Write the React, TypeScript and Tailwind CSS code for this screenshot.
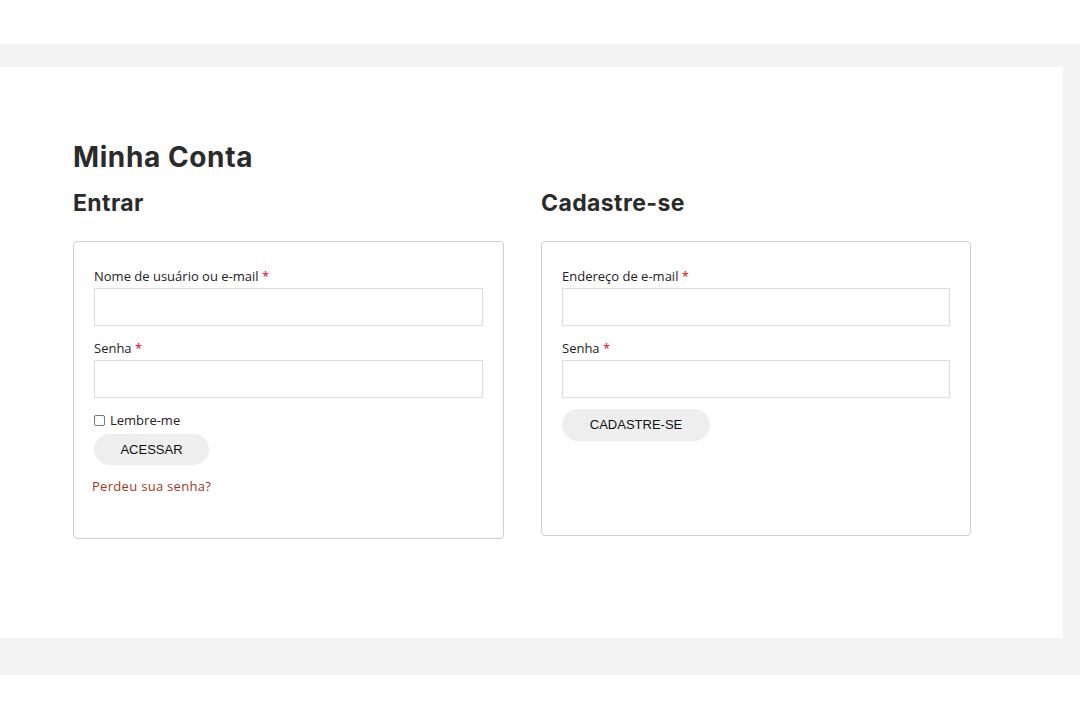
export default function App() {
  const label = "block text-[13px] text-[#222] mb-[3px] leading-[18px]"
  const input = "block w-full h-[38px] border border-[#dcdcdc] bg-white"
  const star = <span className="text-[#e2001a]">*</span>

  return (
    <div className="w-[1080px] h-[720px] bg-white font-['Open_Sans',sans-serif]">
      <div className="h-[44px]" />
      <div className="bg-[#f3f3f3] pt-[23px] pb-[37px] pr-[17px]">
        <div className="bg-white h-[571px] pl-[73px] pt-[71px]">
          <h1 className="font-['Inter',sans-serif] font-bold text-[28px] leading-[38px] text-[#2b2b2b] tracking-[0.6px]">
            Minha Conta
          </h1>
          <div className="flex gap-[37px] mt-[12px]">
            {/* Entrar */}
            <div className="w-[431px]">
              <h2 className="font-['Inter',sans-serif] font-bold text-[23px] leading-[30px] text-[#2b2b2b] tracking-[0.4px]">Entrar</h2>
              <div className="mt-[23px] h-[298px] border border-[#cfcfcf] rounded-[4px] px-[20px] pt-[25px]">
                <label className={label}>Nome de usuário ou e-mail {star}</label>
                <div className={input} />
                <label className={label + " mt-[13px]"}>Senha {star}</label>
                <div className={input} />
                <div className="flex items-center gap-[5px] mt-[13px] text-[13px] text-[#222] leading-[18px]">
                  <span className="w-[11px] h-[11px] border border-[#767676] rounded-[2px] bg-white" />
                  Lembre-me
                </div>
                <button className="mt-[5px] w-[115px] h-[31px] rounded-full bg-[#eeeeee] font-['Liberation_Sans',sans-serif] text-[13px] text-[#111]">
                  ACESSAR
                </button>
                <p className="mt-[12px] -ml-[2px] text-[13px] text-[#9b3a24] tracking-[0.3px]">Perdeu sua senha?</p>
              </div>
            </div>
            {/* Cadastre-se */}
            <div className="w-[430px]">
              <h2 className="font-['Inter',sans-serif] font-bold text-[23px] leading-[30px] text-[#2b2b2b] tracking-[0.4px]">Cadastre-se</h2>
              <div className="mt-[23px] h-[295px] border border-[#cfcfcf] rounded-[4px] px-[20px] pt-[25px]">
                <label className={label}>Endereço de e-mail {star}</label>
                <div className={input} />
                <label className={label + " mt-[13px]"}>Senha {star}</label>
                <div className={input} />
                <button className="mt-[11px] w-[148px] h-[32px] rounded-full bg-[#eeeeee] font-['Liberation_Sans',sans-serif] text-[13px] text-[#111]">
                  CADASTRE-SE
                </button>
              </div>
            </div>
          </div>
        </div>
      </div>
    </div>
  )
}
